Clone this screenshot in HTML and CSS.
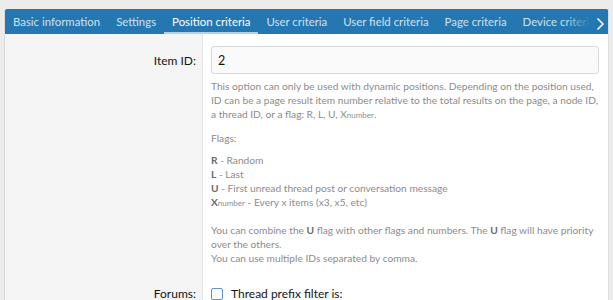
FILE: index.html
```html
<!DOCTYPE html>
<html lang="en">
<head>
  <meta charset="UTF-8" />
  <title>Edit position</title>
  <link rel="stylesheet" href="styles.css">
</head>
<body>

<div class="block">
  <div class="tabs">
    <a class="tab">Basic information</a>
    <a class="tab">Settings</a>
    <a class="tab is-active">Position criteria</a>
    <a class="tab">User criteria</a>
    <a class="tab">User field criteria</a>
    <a class="tab">Page criteria</a>
    <a class="tab">Device criteria</a>
    <span class="tabs-next">
      <svg width="9" height="14" viewBox="0 0 9 14"><path d="M1.5 1.5 L7 7 L1.5 12.5" fill="none" stroke="#fff" stroke-width="1.5"/></svg>
    </span>
  </div>

  <div class="form-row">
    <div class="form-label">Item ID:</div>
    <div class="form-input">
      <input class="input" type="text" value="2">
      <div class="explain">
        <p>This option can only be used with dynamic positions. Depending on the position used, ID can be a page result item number relative to the total results on the page, a node ID, a thread ID, or a flag: R, L, U, X<small>number</small>.</p>
        <p class="flags-title">Flags:</p>
        <p class="flags">
          <b>R</b> - Random<br>
          <b>L</b> - Last<br>
          <b>U</b> - First unread thread post or conversation message<br>
          <b>X</b><small>number</small> - Every x items (x3, x5, etc)
        </p>
        <p>You can combine the <b>U</b> flag with other flags and numbers. The <b>U</b> flag will have priority over the others.<br>
        You can use multiple IDs separated by comma.</p>
      </div>
    </div>
  </div>

  <div class="form-row">
    <div class="form-label form-label--check">Forums:</div>
    <div class="form-input form-input--check">
      <label class="check"><span class="check-box"></span>Thread prefix filter is:</label>
    </div>
  </div>
</div>

</body>
</html>
```

FILE: styles.css
```css
* {
  margin: 0;
  padding: 0;
  box-sizing: border-box;
}

body {
  font-family: 'Lato', sans-serif;
  background: #ececec;
  color: #141414;
  padding: 9px 4px 0 4px;
}

.block {
  border: 1px solid #dcdcdc;
  border-top: 0;
  background: #fff;
}

.tabs {
  position: relative;
  display: flex;
  height: 25px;
  background: #2577b1;
  border-radius: 2px 2px 0 0;
  overflow: hidden;
  white-space: nowrap;
}

.tab {
  display: block;
  padding: 0 8px;
  font-size: 11.4px;
  line-height: 25px;
  color: #cfe1ef;
  border-bottom: 2px solid transparent;
}

.tab.is-active {
  color: #fff;
  border-bottom-color: #b6d0e6;
}

.tabs-next {
  position: absolute;
  right: 0;
  top: 0;
  width: 44px;
  height: 25px;
  padding: 6px 0 0 32px;
  background: linear-gradient(to right, rgba(37, 119, 177, 0), #2577b1 60%);
}

.form-row {
  display: grid;
  grid-template-columns: 198px 1fr;
}

.form-label {
  background: #f5f5f5;
  border-right: 1px solid #e6e6e6;
  text-align: right;
  padding: 19px 6px 0 0;
  font-size: 12px;
  color: #141414;
}

.form-label--check {
  padding-top: 0;
  line-height: 14px;
}

.form-input {
  padding: 12px 9px 0 8px;
}

.form-input--check {
  padding-top: 0;
}

.input {
  display: block;
  width: 100%;
  height: 28px;
  border: 1px solid #d8d8d8;
  border-radius: 3px;
  background: #fafafa;
  padding: 0 6px;
  font-family: inherit;
  font-size: 12.5px;
  color: #141414;
}

.explain {
  font-size: 10.2px;
  line-height: 14px;
  color: #8c8c8c;
  padding-top: 5px;
  padding-bottom: 22px;
}

.explain p {
  margin-bottom: 10px;
}

.explain p:last-child {
  margin-bottom: 0;
}

.explain .flags-title {
  margin-bottom: 8px;
}

.explain .flags {
  margin-bottom: 14px;
}

.explain b {
  color: #6a6a6a;
}

.explain small {
  font-size: 8px;
  line-height: 1;
}

.check {
  display: flex;
  align-items: center;
  gap: 8px;
  font-size: 12px;
  line-height: 14px;
  padding-bottom: 20px;
}

.check-box {
  width: 12px;
  height: 12px;
  border: 1px solid #5a95c8;
  border-radius: 2px;
  background: #fff;
}
```
